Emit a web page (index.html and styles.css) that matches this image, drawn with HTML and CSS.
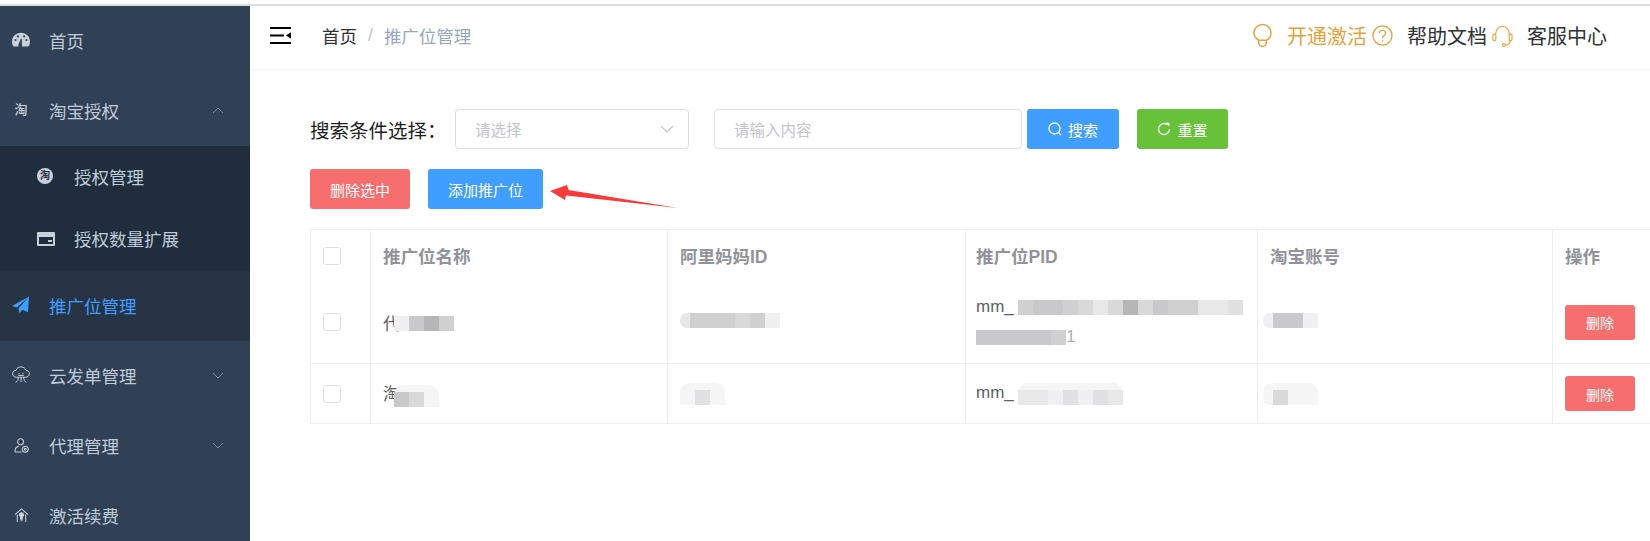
FILE: index.html
```html
<!DOCTYPE html>
<html>
<head>
    <meta charset="utf-8">
    <title>推广位管理</title>
    <link rel="stylesheet" href="styles.css">
</head>
<body>
<div class="app">
    <aside class="sidebar">
        <a class="menu-item">
            <svg class="menu-icon" viewBox="0 0 20 16"><path fill="#c8d0da" d="M10 0C4.5 0 0 4.300 0 9.700c0 2.300.6 4.400 1.800 5.600h5.500c-.3-.5-.4-1-.3-1.500L9.600 6.500l1.200.2.300 7.200c0 .5-.1 1-.4 1.400h7.500c1.200-1.200 1.800-3.300 1.800-5.600C20 4.300 15.500 0 10 0z"/><g fill="#304156"><circle cx="4" cy="8" r="1.200"/><circle cx="6.500" cy="4" r="1.200"/><circle cx="13.500" cy="4" r="1.200"/><circle cx="16" cy="8" r="1.200"/></g></svg>
            <span>首页</span>
        </a>
        <a class="menu-item">
            <span class="menu-icon tao-glyph">淘</span>
            <span>淘宝授权</span>
            <svg class="chevron" viewBox="0 0 12 7"><path d="M1 6l5-5 5 5"/></svg>
        </a>
        <div class="submenu">
            <a class="menu-item sub-item">
                <span class="menu-icon tao-round">淘</span>
                <span>授权管理</span>
            </a>
            <a class="menu-item sub-item">
                <svg class="menu-icon" viewBox="0 0 18 14"><path fill="#c8d0da" fill-rule="evenodd" d="M1 0h16a1 1 0 0 1 1 1v12a1 1 0 0 1-1 1H1a1 1 0 0 1-1-1V1a1 1 0 0 1 1-1zm1 5v7h14V5zm9 3h4v2h-4z"/></svg>
                <span>授权数量扩展</span>
            </a>
        </div>
        <a class="menu-item active">
            <svg class="menu-icon" viewBox="0 0 18 17"><path fill="#409eff" d="M17 0L0 9.500l5 1.600zM17 0L6.500 12l1 5 2.500-3.800 6 2.300z"/></svg>
            <span>推广位管理</span>
        </a>
        <a class="menu-item">
            <svg class="menu-icon" viewBox="0 0 20 20" fill="none" stroke="#c8d0da" stroke-width="1.100"><path d="M5 12.500C2.500 12.500.7 10.800.7 8.500S2.500 4.800 4.500 4.800C5.200 2.400 7.300 1 10 1s4.800 1.400 5.500 3.800c2 0 3.800 1.400 3.800 3.700s-1.800 4-4.300 4z"/><path d="M7 8.500h1.500M11.500 8.500H13M7 10.500h6M7 12.500c0 3-1 5-3 5.500M10 12.500V18M13 12.500c0 3 1 5 3 5.500"/></svg>
            <span>云发单管理</span>
            <svg class="chevron" viewBox="0 0 12 7"><path d="M1 1l5 5 5-5"/></svg>
        </a>
        <a class="menu-item">
            <svg class="menu-icon small-icon" viewBox="0 0 16 16" fill="none" stroke="#c8d0da" stroke-width="1.100"><circle cx="7" cy="4" r="3.200"/><path d="M1 15c0-4 2-6 4.500-6.500M1 15h7"/><circle cx="12" cy="12" r="3.200"/><circle cx="12" cy="12" r="1"/></svg>
            <span>代理管理</span>
            <svg class="chevron" viewBox="0 0 12 7"><path d="M1 1l5 5 5-5"/></svg>
        </a>
        <a class="menu-item">
            <svg class="menu-icon small-icon" viewBox="0 0 16 16" fill="none" stroke="#c8d0da" stroke-width="1.100"><path d="M1 7l7-6 7 6M3.500 7v8M12.500 7v8"/><path fill="#c8d0da" d="M8 5a2.200 2.200 0 0 0-1 4.200V12h2V9.200A2.200 2.200 0 0 0 8 5zM7 13.500h2"/></svg>
            <span>激活续费</span>
        </a>
    </aside>

    <main class="main">
        <header class="navbar">
            <svg class="hamburger" viewBox="0 0 21 17"><path d="M0 0h21v2H0zM0 7.500h14v2H0zM0 15h21v2H0zM21 5.200v6.600l-5-3.300z"/></svg>
            <nav class="breadcrumb">
                <span>首页</span>
                <span class="crumb-sep">/</span>
                <span class="crumb-current">推广位管理</span>
            </nav>
            <div class="nav-right">
                <svg class="nav-icon lamp" viewBox="0 0 20 25" fill="none" stroke="#e6a23c" stroke-width="1.600"><path d="M6 17.500C3 15.800 1 13.200 1 10a9 9 0 0 1 18 0c0 3.200-2 5.800-5 7.500z"/><path d="M6 17.500V20a4 4 0 0 0 8 0v-2.500"/></svg>
                <span class="activate">开通激活</span>
                <svg class="nav-icon help" viewBox="0 0 22 22" fill="none" stroke="#e6a23c" stroke-width="1.400"><circle cx="11" cy="11" r="10"/><path d="M7.800 8.500a3.200 3.200 0 1 1 4.800 2.800c-1 .6-1.600 1.200-1.600 2.700"/><path d="M11 16v1.600"/></svg>
                <span class="help-text">帮助文档</span>
                <svg class="nav-icon headset" viewBox="0 0 22 24" fill="none" stroke="#e6a23c" stroke-width="1.200"><path d="M4 10V9a7 7 0 0 1 14 0v1"/><rect x="1" y="10" width="3" height="7" rx="1.500"/><path d="M18 10h1.500a1.500 1.500 0 0 1 1.500 1.500v4a1.500 1.500 0 0 1-1.500 1.500H18zM19 17c0 3-2 4.500-5 4.500"/><circle cx="12.500" cy="21.500" r="1.500"/></svg>
                <span class="service-text">客服中心</span>
            </div>
        </header>

        <section class="content">
            <div class="search-row">
                <label class="search-label">搜索条件选择：</label>
                <div class="field select-field">
                    <span>请选择</span>
                    <svg class="select-arrow" viewBox="0 0 14 8"><path d="M1 1l6 6 6-6"/></svg>
                </div>
                <div class="field input-field"><span>请输入内容</span></div>
                <button class="btn btn-blue btn-search">
                    <svg class="btn-icon" viewBox="0 0 14 14"><circle cx="6.500" cy="6.500" r="5.500"/><path d="M10.500 10.500L13 13"/></svg>
                    搜索
                </button>
                <button class="btn btn-green btn-reset">
                    <svg class="btn-icon" viewBox="0 0 14 14"><path d="M12.500 7A5.500 5.500 0 1 1 10.500 2.800"/><path class="btn-icon-fill" d="M9 .5l3.500.2-.3 3.800z"/></svg>
                    重置
                </button>
            </div>

            <div class="action-row">
                <button class="btn btn-red btn-action">删除选中</button>
                <button class="btn btn-blue btn-action btn-add">添加推广位</button>
            </div>

            <table class="pid-table">
                <colgroup>
                    <col class="col-check"><col class="col-name"><col class="col-id"><col class="col-pid"><col class="col-account"><col class="col-op">
                </colgroup>
                <thead>
                    <tr>
                        <th><span class="checkbox"></span></th>
                        <th>推广位名称</th>
                        <th>阿里妈妈ID</th>
                        <th class="cell-pid">推广位PID</th>
                        <th>淘宝账号</th>
                        <th>操作</th>
                    </tr>
                </thead>
                <tbody>
                    <tr class="row-tall">
                        <td><span class="checkbox"></span></td>
                        <td>代<span class="blur blur-over blur-up"><i class="g6"></i><i class="g1"></i><i class="g0"></i><i class="g2"></i></span></td>
                        <td><span class="blur blur-up"><i class="g5 cap"></i><i class="g2"></i><i class="g2"></i><i class="g2"></i><i class="g3"></i><i class="g2"></i><i class="g6"></i></span></td>
                        <td class="cell-pid">
                            <div class="pid-line">mm_<span class="blur blur-tight"><i class="g2"></i><i class="g1"></i><i class="g1"></i><i class="g2"></i><i class="g3"></i><i class="g5"></i><i class="g3"></i><i class="g0"></i><i class="g3"></i><i class="g1"></i><i class="g2"></i><i class="g2"></i><i class="g5"></i><i class="g5"></i><i class="g4"></i></span></div>
                            <div class="pid-line"><span class="blur"><i class="g1"></i><i class="g1"></i><i class="g1"></i><i class="g1"></i><i class="g1"></i><i class="g2"></i></span><span class="pid-tail">1</span></div>
                        </td>
                        <td class="cell-acc"><span class="blur blur-up"><i class="g6 cap"></i><i class="g1"></i><i class="g1"></i><i class="g6"></i></span></td>
                        <td><button class="btn btn-red btn-del">删除</button></td>
                    </tr>
                    <tr class="row-short">
                        <td><span class="checkbox"></span></td>
                        <td>淘<span class="blur blur-over blur-low"><i class="g1"></i><i class="g3"></i><i class="g7"></i></span></td>
                        <td><span class="blur blur-low"><i class="g7"></i><i class="g4"></i><i class="g7"></i></span></td>
                        <td class="cell-pid">mm_<span class="blur blur-tight blur-low"><i class="g5"></i><i class="g5"></i><i class="g6"></i><i class="g4"></i><i class="g6"></i><i class="g4"></i><i class="g5"></i></span></td>
                        <td class="cell-acc"><span class="blur blur-low"><i class="g7 cap"></i><i class="g3"></i><i class="g7"></i><i class="g7"></i></span></td>
                        <td><button class="btn btn-red btn-del">删除</button></td>
                    </tr>
                </tbody>
            </table>

            <svg class="arrow" viewBox="0 0 130 26"><path d="M0 6L17 0l1.500 5L128 23 16 10.500 15 15z"/></svg>
        </section>
    </main>
</div>
</body>
</html>
```

FILE: styles.css
```css
* {
    margin: 0;
    padding: 0;
    box-sizing: border-box;
}

html, body {
    height: 100%;
    overflow: hidden;
    background: #fff;
}

body {
    padding-top: 4px;
    font-family: "Liberation Sans", "Noto Sans CJK SC", sans-serif;
    color: #303133;
}

.app {
    display: flex;
    height: 100%;
    border-top: 2px solid #dcdcdc;
}

/* 侧边栏 */
.sidebar {
    width: 250px;
    flex-shrink: 0;
    background: #304156;
    overflow: hidden;
}

.menu-item {
    display: flex;
    align-items: center;
    height: 70px;
    padding-left: 12px;
    padding-bottom: 2px;
    font-size: 17.5px;
    color: #bfcbd9;
}

.menu-icon {
    width: 18px;
    height: 18px;
    margin-right: 19px;
    flex-shrink: 0;
}

.small-icon {
    width: 15px;
    height: 15px;
    margin-left: 2px;
    margin-right: 20px;
}

.tao-glyph {
    font-size: 13px;
    line-height: 18px;
    text-align: center;
    font-weight: 500;
    color: #c8d0da;
}

.tao-round {
    width: 16px;
    height: 16px;
    margin-right: 21px;
    border-radius: 50%;
    background: #c8d0da;
    color: #1f2d3d;
    font-size: 10px;
    line-height: 16px;
    text-align: center;
    font-weight: 700;
}

.chevron {
    width: 12px;
    height: 7px;
    margin-left: auto;
    margin-right: 26px;
    fill: none;
    stroke: #7d8894;
    stroke-width: 1;
}

.submenu {
    background: #1f2d3d;
}

.sub-item {
    height: 62.5px;
    padding-left: 37px;
}

.active {
    background: #263445;
    color: #409eff;
}

/* 顶栏 */
.main {
    position: relative;
    flex: 1;
    min-width: 0;
    overflow: hidden;
}

.navbar {
    display: flex;
    align-items: center;
    height: 63px;
    padding-left: 20px;
    box-shadow: 0 2px 4px rgba(0, 21, 41, .04);
}

.hamburger {
    width: 21px;
    height: 17px;
    margin-top: -4px;
}

.breadcrumb {
    display: flex;
    align-items: center;
    margin-left: 31px;
    margin-top: -4px;
    font-size: 17.5px;
}

.crumb-sep {
    margin: 0 11px;
    color: #c0c4cc;
}

.crumb-current {
    color: #97a8be;
}

.nav-right {
    display: flex;
    align-items: center;
    margin-left: auto;
    padding-right: 43px;
    margin-top: -4px;
    font-size: 20px;
}

.nav-icon {
    flex-shrink: 0;
}

.lamp {
    width: 19px;
    height: 25px;
    margin-right: 15px;
}

.activate {
    color: #e6a23c;
}

.help {
    width: 21px;
    height: 21px;
    margin-left: 5px;
    margin-right: 14px;
}

.headset {
    width: 21px;
    height: 24px;
    margin-left: 5px;
    margin-right: 14px;
}

/* 内容区 */
.content {
    padding: 40px 0 0 60px;
}

.search-row, .action-row {
    display: flex;
    align-items: center;
}

.search-label {
    width: 145px;
    font-size: 19.500px;
    white-space: nowrap;
    color: #1f1f1f;
}

.field {
    display: flex;
    align-items: center;
    height: 40px;
    padding-left: 19px;
    border: 1px solid #dcdfe6;
    border-radius: 4px;
    font-size: 15.500px;
    color: #c0c4cc;
    background: #fff;
}

.select-field {
    width: 234px;
}

.select-arrow {
    width: 14px;
    height: 8px;
    margin-left: auto;
    margin-right: 14px;
    fill: none;
    stroke: #c0c4cc;
    stroke-width: 1.200;
}

.input-field {
    width: 308px;
    margin-left: 25px;
}

.btn {
    display: inline-flex;
    align-items: center;
    justify-content: center;
    height: 40px;
    border: 0;
    border-radius: 3px;
    font-family: inherit;
    font-size: 15px;
    color: #fff;
}

.btn-blue {
    background: #409eff;
}

.btn-green {
    background: #67c23a;
}

.btn-red {
    background: #f76e6e;
}

.btn-search {
    width: 92px;
    margin-left: 5px;
}

.btn-reset {
    width: 91px;
    margin-left: 18px;
}

.btn-icon {
    width: 14px;
    height: 14px;
    margin-right: 6px;
    fill: none;
    stroke: #fff;
    stroke-width: 1.300;
}

.btn-icon-fill {
    fill: #fff;
    stroke: none;
}

.action-row {
    margin-top: 20px;
}

.btn-action {
    width: 100px;
}

.btn-add {
    width: 115px;
    margin-left: 18px;
}

/* 表格 */
.pid-table {
    width: 1400px;
    margin-top: 20px;
    table-layout: fixed;
    border-collapse: collapse;
    font-size: 17px;
    color: #606266;
}

.col-check { width: 60px; }
.col-name { width: 297px; }
.col-id { width: 298px; }
.col-pid { width: 292px; }
.col-account { width: 295px; }
.col-op { width: 158px; }

.pid-table th, .pid-table td {
    padding: 0 12px;
    text-align: left;
    vertical-align: middle;
    border-left: 1px solid #ebeef5;
}

.pid-table th {
    height: 52px;
    font-size: 17.5px;
    color: #909399;
    font-weight: 700;
    border-top: 1px solid #ebeef5;
}

.pid-table td {
    border-bottom: 1px solid #ebeef5;
}

.pid-table .cell-pid {
    padding-left: 10px;
}

.pid-table .cell-acc {
    padding-left: 5px;
}

.row-tall {
    height: 82px;
}

.row-short {
    height: 60px;
}

.checkbox {
    display: block;
    width: 18px;
    height: 18px;
    border: 1px solid #dcdfe6;
    border-radius: 3px;
}

.pid-line {
    line-height: 30px;
    white-space: nowrap;
}

.pid-tail {
    color: #b0b0b0;
}

/* 打码 */
.blur {
    display: inline-flex;
    vertical-align: middle;
    border-radius: 7px;
}

.blur i {
    display: block;
    width: 15px;
    height: 15px;
}

.blur-over {
    margin-left: -6px;
}

.blur-up {
    margin-top: -4px;
}

.blur-tight {
    margin-left: 4px;
}

.blur-low {
    padding-top: 7px;
    border-radius: 10px;
    background: #f5f5f5;
}

.blur .cap {
    width: 10px;
    border-radius: 7px 0 0 7px;
}

.g0 { background: #b6b6b6; }
.g1 { background: #c9c9cb; }
.g2 { background: #d0d0d0; }
.g3 { background: #d9d9d9; }
.g4 { background: #e1e1e3; }
.g5 { background: #e8e8e8; }
.g6 { background: #f0f0f2; }
.g7 { background: #f5f5f5; }

.btn-del {
    width: 70px;
    height: 35px;
    font-size: 14px;
}

.arrow {
    position: absolute;
    left: 300px;
    top: 179px;
    width: 130px;
    height: 26px;
    fill: #f73b3b;
}
```
